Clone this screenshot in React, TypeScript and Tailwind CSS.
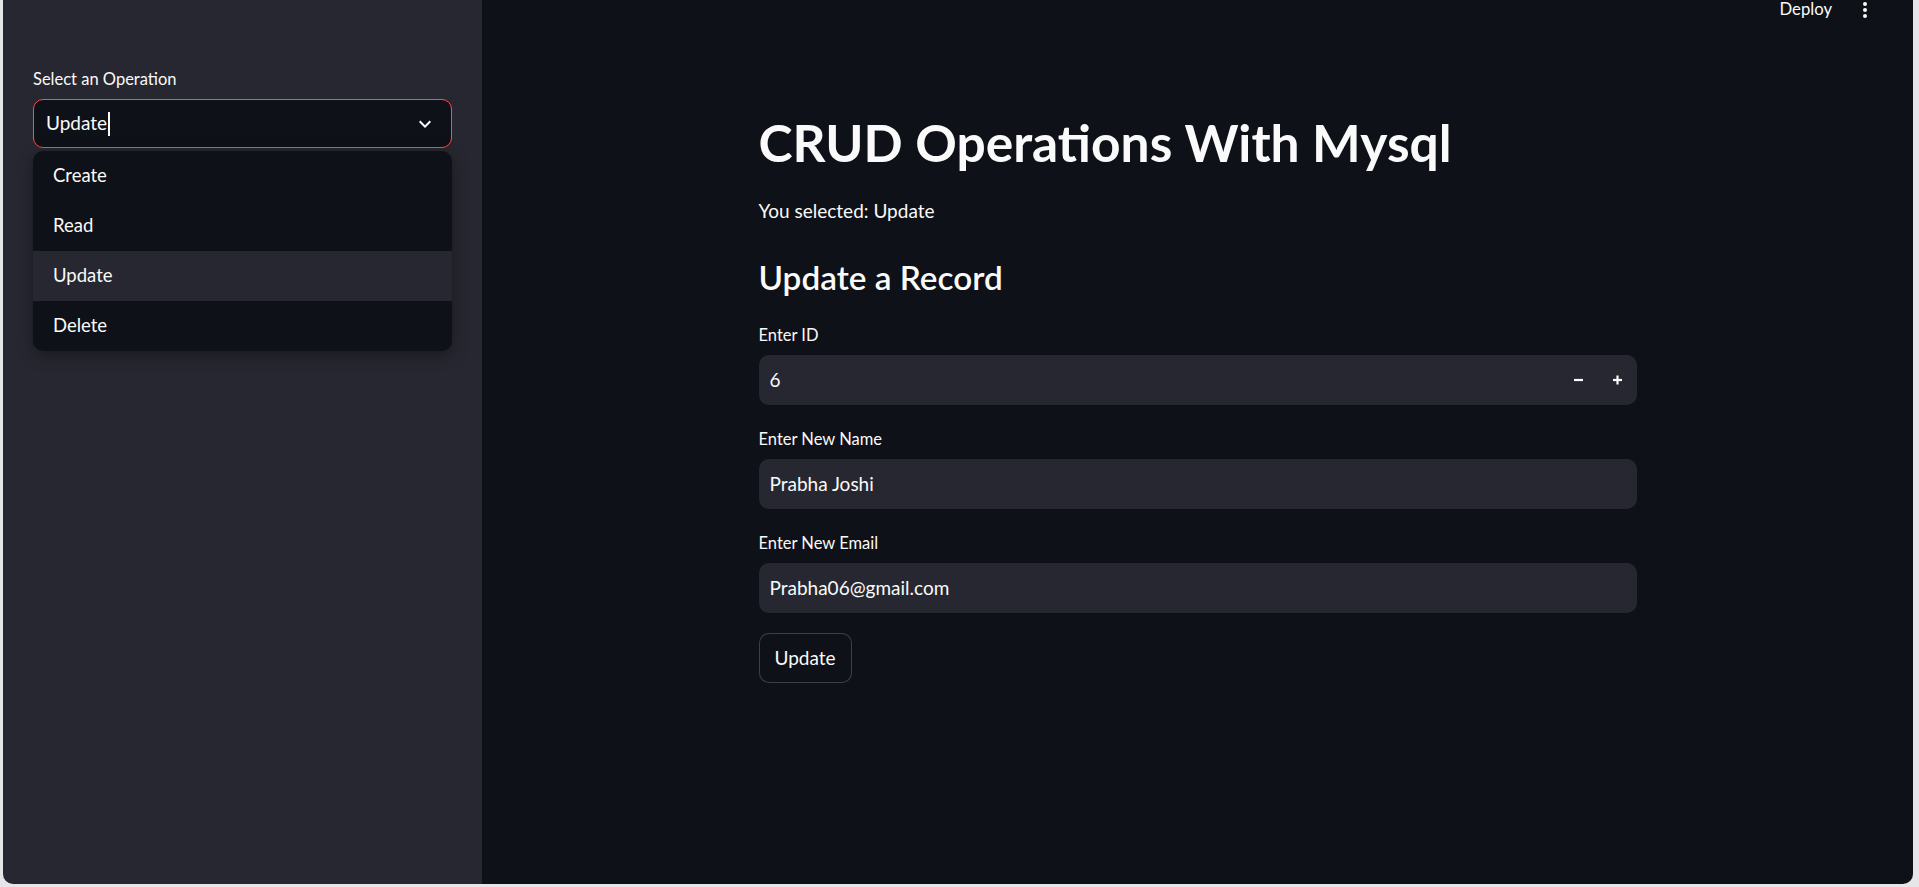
import { useState } from "react";

const font = { fontFamily: "Lato, 'Noto Sans', sans-serif" };

const operations = ["Create", "Read", "Update", "Delete"];

function Chevron() {
	return (
		<svg width="24" height="24" viewBox="0 0 24 24" fill="#fafafa">
			<path d="M7.41 8.59 12 13.17l4.59-4.58L18 10l-6 6-6-6z" />
		</svg>
	);
}

function Kebab() {
	return (
		<svg width="6" height="18" viewBox="0 0 6 18" fill="#fafafa">
			<circle cx="3" cy="3" r="2" />
			<circle cx="3" cy="9" r="2" />
			<circle cx="3" cy="15" r="2" />
		</svg>
	);
}

function Sidebar() {
	const [selected] = useState("Update");

	return (
		<div className="w-[479px] shrink-0 bg-[#262730] pt-[68px] px-[30px]">
			<div className="text-[16.5px] leading-[22px] text-[#fafafa]">Select an Operation</div>
			<div className="mt-[9px] h-[49px] rounded-[10px] border border-[#ff4b4b] bg-[#0e1117] flex items-center pl-[12px] pr-[14px]">
				<span className="text-[19px] text-[#fafafa]">{selected}</span>
				<span className="ml-[1px] w-[2px] h-[24px] bg-[#fafafa]" />
				<div className="flex-1" />
				<Chevron />
			</div>
			<div className="mt-[3px] rounded-[10px] bg-[#0e1117] overflow-hidden shadow-[0_4px_16px_rgba(0,0,0,0.35)]">
				{operations.map((op) => (
					<div
						key={op}
						className={
							op === selected
								? "h-[50px] flex items-center pl-[20px] text-[18.5px] text-[#fafafa] bg-[#262730]"
								: "h-[50px] flex items-center pl-[20px] text-[18.5px] text-[#fafafa]"
						}
					>
						{op}
					</div>
				))}
			</div>
		</div>
	);
}

function Field({ label, value, number }: { label: string; value: string; number?: boolean }) {
	return (
		<div>
			<div className="text-[16.5px] leading-[22px] text-[#fafafa]">{label}</div>
			<div className="mt-[9px] h-[50px] rounded-[10px] bg-[#262730] flex items-center pl-[11px] pr-[12px]">
				<span className="text-[19px] text-[#fafafa] flex-1">{value}</span>
				{number && (
					<div className="flex items-center gap-[28px] pr-[2px]">
						<svg width="11" height="12" viewBox="0 0 11 12" stroke="#fafafa" strokeWidth="2.2">
							<line x1="1" y1="6" x2="10" y2="6" />
						</svg>
						<svg width="11" height="12" viewBox="0 0 11 12" stroke="#fafafa" strokeWidth="2.2">
							<line x1="1" y1="6" x2="10" y2="6" />
							<line x1="5.5" y1="1.5" x2="5.5" y2="10.5" />
						</svg>
					</div>
				)}
			</div>
		</div>
	);
}

export default function App() {
	return (
		<div className="w-[1919px] h-[887px] bg-[#e6e6e8] overflow-hidden" style={font}>
			<div className="ml-[3px] w-[1910px] h-[884px] rounded-b-[10px] overflow-hidden flex">
				<Sidebar />
				<div className="flex-1 bg-[#0e1117] flex flex-col">
					<div className="h-[20px] flex items-center justify-end pr-[45px] gap-[30px]">
						<span className="text-[16.7px] text-[#fafafa]">Deploy</span>
						<Kebab />
					</div>
					<div className="w-[878px] mx-auto">
						<h1 className="mt-[89px] text-[51.5px] leading-[66px] font-bold text-[#fafafa]">
							CRUD Operations With Mysql
						</h1>
						<p className="mt-[20px] text-[19px] leading-[32px] text-[#fafafa]">You selected: Update</p>
						<h3 className="mt-[29px] text-[33.3px] leading-[42px] font-semibold text-[#fafafa]">
							Update a Record
						</h3>
						<div className="mt-[26px] flex flex-col gap-[23px]">
							<Field label="Enter ID" value="6" number />
							<Field label="Enter New Name" value="Prabha Joshi" />
							<Field label="Enter New Email" value="Prabha06@gmail.com" />
						</div>
						<button
							type="button"
							className="mt-[20px] h-[50px] px-[15px] rounded-[10px] border border-[rgba(250,250,250,0.2)] bg-[#0e1117] text-[19px] text-[#fafafa]"
						>
							Update
						</button>
					</div>
				</div>
			</div>
		</div>
	);
}
